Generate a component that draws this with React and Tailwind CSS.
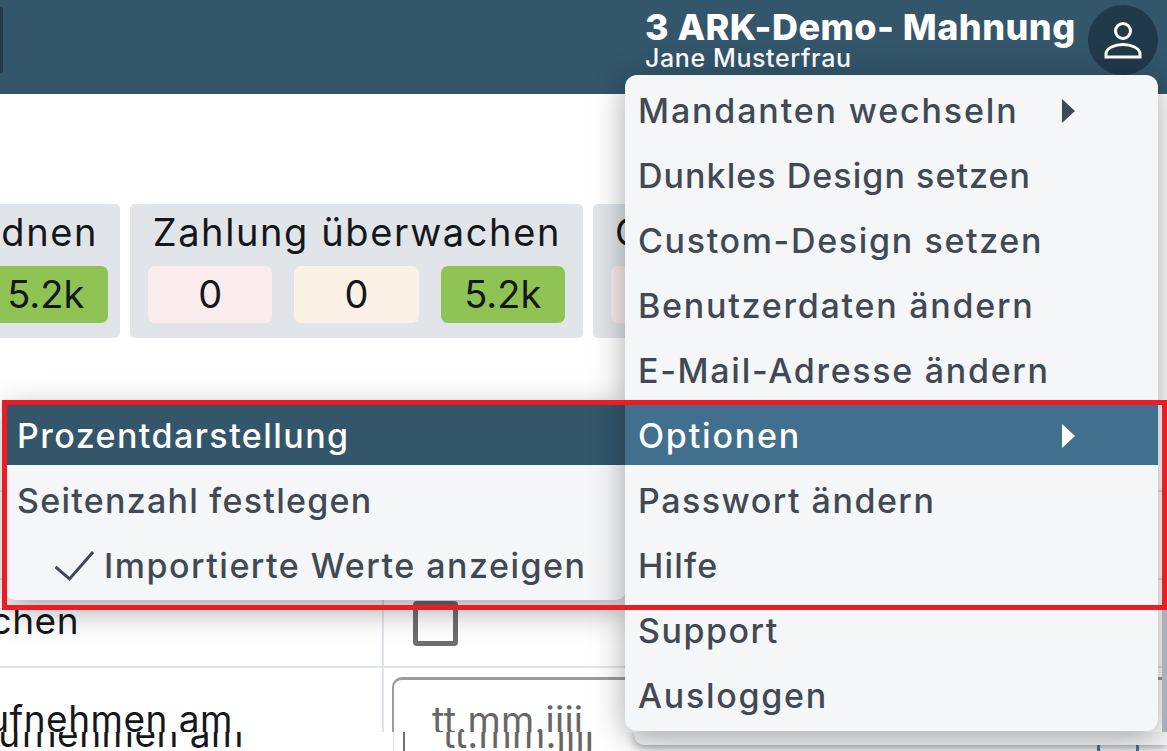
import React from 'react';

const menuItems = [
    { label: 'Mandanten wechseln', arrow: true, tracking: 'tracking-[1.85px]' },
    { label: 'Dunkles Design setzen', tracking: 'tracking-[1.05px]' },
    { label: 'Custom-Design setzen', tracking: 'tracking-[1.65px]' },
    { label: 'Benutzerdaten ändern', tracking: 'tracking-[1.75px]' },
    { label: 'E-Mail-Adresse ändern', tracking: 'tracking-[1.7px]' },
    { label: 'Optionen', arrow: true, active: true, tracking: 'tracking-[1.8px]' },
    { label: 'Passwort ändern', tracking: 'tracking-[1.5px]' },
    { label: 'Hilfe', tracking: 'tracking-[1.2px]' },
    { label: 'Support', tracking: 'tracking-[1.5px]' },
    { label: 'Ausloggen', tracking: 'tracking-[1.7px]' }
];

const cards = [
    { title: 'Zahlung zuordnen', align: 'text-right', pad: 'pl-[24px] pr-[12px]' },
    { title: 'Zahlung überwachen', align: 'text-right', pad: 'px-[18px]' },
    { title: 'Gemahnt', align: 'text-left', pad: 'px-[18px]' }
];

const Arrow = ({ className = '' }) => (
    <svg width="13" height="24" viewBox="0 0 13 24" className={`absolute left-[437px] top-[24px] ${className}`}>
        <path d="M0 0 L13 12 L0 24 Z" fill="currentColor" />
    </svg>
);

const Pill = ({ bg, children }) => (
    <div className={`flex-1 h-[57px] rounded-[7px] flex items-center justify-center text-[38px] ${bg}`}>
        {children}
    </div>
);

const Card = ({ title, align, pad }) => (
    <div className="w-[453px] h-[134px] shrink-0 rounded-[5px] bg-[#e1e4e9] pt-[7px] text-[#14171c]">
        <div className={`h-[55px] px-[22px] text-[38px] leading-[43px] tracking-[1.6px] whitespace-nowrap ${align}`}>{title}</div>
        <div className={`flex gap-[22px] ${pad}`}>
            <Pill bg="bg-[#faecee]">0</Pill>
            <Pill bg="bg-[#fbf1e5]">0</Pill>
            <Pill bg="bg-[#8fc353]">5.2k</Pill>
        </div>
    </div>
);

const MenuRow = ({ label, arrow, active, tracking }) => (
    <div className={`relative h-[65px] pl-[13px] pt-[7px] text-[34px] leading-[58px] font-medium whitespace-nowrap ${tracking} ${active ? 'bg-[#41708e] text-white' : 'text-[#414955]'}`}>
        {label}
        {arrow && <Arrow />}
    </div>
);

const UserMenu = () => (
    <div className="absolute left-[625px] top-[75px] w-[533px] pb-[6px] rounded-[12px] bg-[#f5f6f8] overflow-hidden shadow-[0_6px_32px_rgba(0,0,0,0.35)]">
        {menuItems.map(item => <MenuRow key={item.label} {...item} />)}
    </div>
);

const SubMenu = () => (
    <div className="absolute left-[5px] top-[400px] w-[621px] pb-[5px] rounded-b-[10px] bg-[#f5f6f8] overflow-hidden shadow-[0_10px_32px_rgba(0,0,0,0.35)]">
        <div className="h-[65px] pl-[12px] pt-[7px] bg-[#33566b] text-white text-[34px] leading-[58px] font-medium tracking-[1.45px]">Prozentdarstellung</div>
        <div className="h-[65px] pl-[12px] pt-[7px] text-[#414955] text-[34px] leading-[58px] font-medium tracking-[1.25px]">Seitenzahl festlegen</div>
        <div className="h-[65px] pl-[50px] pt-[7px] text-[#414955] text-[34px] leading-[58px] font-medium tracking-[1.5px] flex gap-[10px]">
            <svg width="39" height="58" viewBox="0 0 39 58" fill="none" className="shrink-0">
                <path d="M0.5 30 L14.5 42 L38 15" stroke="#414955" strokeWidth="3" />
            </svg>
            <span>Importierte Werte anzeigen</span>
        </div>
    </div>
);

export default function App() {
    return (
        <div className="relative w-[1167px] h-[751px] overflow-hidden bg-white [font-family:Inter,sans-serif]">
            <header className="h-[94px] bg-[#33566b] flex justify-between pr-[9px] text-white">
                <div className="w-[3px] h-[66px] mt-[7px] rounded-r-[4px] bg-[#213a4a]"></div>
                <div className="flex gap-[13px] pt-[5px]">
                    <div className="w-[429px]">
                        <div className="-ml-[1px] text-[36px] leading-[45px] font-extrabold tracking-[0.45px] whitespace-nowrap">3 ARK-Demo- Mahnung</div>
                        <div className="-ml-[1px] -mt-[3px] text-[25px] leading-[22px] font-medium tracking-[0.6px] whitespace-nowrap">Jane Musterfrau</div>
                    </div>
                    <div className="w-[70px] h-[70px] rounded-full bg-[#213a4a] flex items-center justify-center">
                        <svg width="40" height="44" viewBox="0 0 40 44" fill="none" stroke="#fff" strokeWidth="3">
                            <circle cx="20" cy="13" r="7.5" />
                            <path d="M3 39 V36 C3 30 12 26.5 20 26.5 C28 26.5 37 30 37 36 V39 Z" />
                        </svg>
                    </div>
                </div>
            </header>

            <main className="h-[638px] overflow-hidden pt-[110px]">
                <div className="flex gap-[10px] -ml-[333px] w-max">
                    {cards.map(card => <Card key={card.title} {...card} />)}
                </div>
                <div className="mt-[66px]">
                    <div className="h-[88px] border-b-2 border-[#e1e4e9] grid grid-cols-[384px_1fr]">
                        <div className="border-r-2 border-[#e1e4e9]"></div>
                    </div>
                    <div className="h-[88px] border-b-2 border-[#e1e4e9] grid grid-cols-[384px_1fr]">
                        <div className="border-r-2 border-[#e1e4e9]"></div>
                    </div>
                    <div className="h-[88px] border-b-2 border-[#e1e4e9] grid grid-cols-[384px_1fr] text-[#14171c]">
                        <div className="border-r-2 border-[#e1e4e9] text-[37px] leading-[82px] flex justify-end pr-[303px] tracking-[0.5px]">chen</div>
                        <div className="pl-[29px] pt-[21px]">
                            <div className="w-[45px] h-[45px] rounded-[4px] border-[5px] border-[#6f6f6f]"></div>
                        </div>
                    </div>
                    <div className="h-[64px] grid grid-cols-[384px_1fr] text-[#14171c]">
                        <div className="border-r-2 border-[#e1e4e9] text-[37px] leading-[44px] pt-[29px] flex justify-end pr-[149px] whitespace-nowrap tracking-[0.5px]">ufnehmen am</div>
                        <div className="pl-[8px] pt-[9px]">
                            <div className="h-[80px] rounded-tl-[10px] border-l-2 border-t-[3px] border-[#9b9b9b] pl-[38px] pt-[18px] text-[38px] leading-[44px] tracking-[0.2px] text-[#666666]">tt.mm.jjjj</div>
                        </div>
                    </div>
                </div>
            </main>

            {/* untere Kante: zweite, leicht versetzte Aufnahme */}
            <div className="relative h-[19px] overflow-hidden bg-white grid grid-cols-[393px_1fr] text-[#14171c]">
                <div className="text-[37px] leading-[44px] -mt-[20px] flex justify-end pr-[149px] whitespace-nowrap tracking-[0.5px]">ufnehmen am</div>
                <div className="border-l border-[#e1e4e9] pl-[9px]">
                    <div className="h-[40px] border-l-2 border-[#6f6f6f] pl-[38px] -mt-[20px] text-[38px] leading-[44px] tracking-[0.2px] text-[#666666]">tt.mm.jjjj</div>
                </div>
                <div className="absolute left-[634px] -top-[4px] w-[533px] h-[17px] rounded-bl-[10px] bg-[#f5f6f8] shadow-[0_3px_8px_rgba(0,0,0,0.35)]"></div>
                <div className="absolute left-[1097px] top-[13px] w-[3px] h-[6px] bg-[#41708e]"></div>
                <div className="absolute left-[1136px] top-[13px] w-[3px] h-[6px] bg-[#41708e]"></div>
            </div>

            <SubMenu />
            <UserMenu />
            <div className="absolute left-[1162px] top-[610px] w-[5px] h-[122px] bg-[#a9b0b9]"></div>
            <div className="absolute left-[2px] top-[400px] w-[1165px] h-[210px] border-[5px] border-[#ed1c24]"></div>
        </div>
    );
}
